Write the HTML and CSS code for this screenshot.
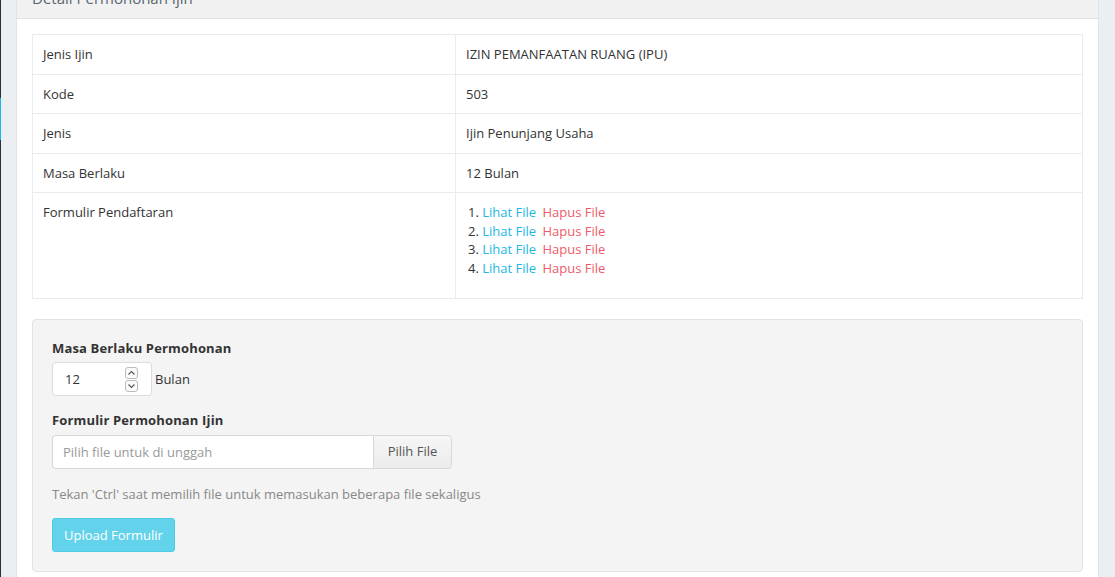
FILE: index.html
```html
<!DOCTYPE html>
<html>
<head>
<meta charset="utf-8">
<link rel="stylesheet" href="styles.css">
</head>
<body>
<div class="sidebar">
  <div class="side-gap"></div>
  <div class="side-active"></div>
</div>
<div class="content">
  <div class="panel">
    <div class="panel-heading">Detail Permohonan Ijin</div>
    <div class="panel-body">
      <table class="info">
        <tr><td class="k">Jenis Ijin</td><td>IZIN PEMANFAATAN RUANG (IPU)</td></tr>
        <tr><td class="k">Kode</td><td>503</td></tr>
        <tr><td class="k">Jenis</td><td>Ijin Penunjang Usaha</td></tr>
        <tr><td class="k">Masa Berlaku</td><td>12 Bulan</td></tr>
        <tr><td class="k">Formulir Pendaftaran</td><td>
          <ol class="files">
            <li><a class="view">Lihat File</a> <a class="del">Hapus File</a></li>
            <li><a class="view">Lihat File</a> <a class="del">Hapus File</a></li>
            <li><a class="view">Lihat File</a> <a class="del">Hapus File</a></li>
            <li><a class="view">Lihat File</a> <a class="del">Hapus File</a></li>
          </ol>
        </td></tr>
      </table>
      <div class="well">
        <div class="form-group">
          <label class="lbl">Masa Berlaku Permohonan</label>
          <div class="row-inline">
            <div class="num-box">
              <input class="num-input" type="text" value="12">
              <div class="spin">
                <span class="spin-btn"><svg width="9" height="6" viewBox="0 0 9 6"><path d="M1.5 4.5 L4.5 1.5 L7.5 4.5" fill="none" stroke="#555" stroke-width="1.1"/></svg></span>
                <span class="spin-btn"><svg width="9" height="6" viewBox="0 0 9 6"><path d="M1.5 1.5 L4.5 4.5 L7.5 1.5" fill="none" stroke="#555" stroke-width="1.1"/></svg></span>
              </div>
            </div>
            <span class="unit">Bulan</span>
          </div>
        </div>
        <div class="form-group last">
          <label class="lbl">Formulir Permohonan Ijin</label>
          <div class="input-group">
            <input class="file-text" type="text" placeholder="Pilih file untuk di unggah">
            <span class="file-btn">Pilih File</span>
          </div>
        </div>
        <p class="help">Tekan 'Ctrl' saat memilih file untuk memasukan beberapa file sekaligus</p>
        <button class="btn-upload">Upload Formulir</button>
      </div>
    </div>
  </div>
</div>
</body>
</html>
```

FILE: styles.css
```css
html, body {
  margin: 0;
  padding: 0;
  height: 100%;
  overflow: hidden;
}
body {
  display: flex;
  font-family: "Open Sans", "Noto Sans", sans-serif;
  font-size: 13px;
  line-height: 1.42857;
  color: #333;
  background: #ebeff1;
}
.sidebar {
  width: 1px;
  flex: none;
  background: #2b2e3b;
  display: flex;
  flex-direction: column;
}
.side-gap { height: 98px; }
.side-active { height: 42px; background: #1ab7e6; }
.content {
  flex: 1;
  padding: 0 16px 0 15px;
}
.panel {
  margin-top: -22px;
  background: #fff;
  border: 1px solid #dfe5e7;
  border-top: none;
}
.panel-heading {
  background: #f1f1f1;
  border-bottom: 1px solid #dfe4e6;
  padding: 10px 15px;
  font-size: 15px;
  line-height: 20px;
  color: #58666e;
}
.panel-body {
  padding: 15px;
}
.info {
  width: 100%;
  border-collapse: collapse;
  margin-bottom: 20px;
}
.info td {
  border: 1px solid #e7ecee;
  padding: 10px;
  vertical-align: top;
}
.info td.k { width: 402px; }
.files {
  list-style: decimal inside;
  margin: 0 0 10px;
  padding: 0 0 0 2px;
}
.files li::marker { content: counter(list-item) ". "; }
.files a { text-decoration: none; }
.view { color: #23b7e5; }
.del { color: #f05a6a; margin-left: 3px; }
.well {
  background: #f4f4f4;
  border: 1px solid #e3e3e3;
  border-radius: 4px;
  padding: 19px 19px 19px;
}
.form-group { margin-bottom: 15px; }
.form-group.last { margin-bottom: 16px; }
.lbl {
  display: block;
  font-weight: bold;
  margin-bottom: 5px;
  letter-spacing: 0.15px;
}
.row-inline {
  display: flex;
  align-items: center;
  gap: 3px;
}
.num-box {
  width: 100px;
  height: 34px;
  box-sizing: border-box;
  border: 1px solid #d8dcde;
  border-radius: 4px;
  background: #fff;
  display: flex;
  align-items: center;
  padding: 0 13px 0 12px;
}
.num-input {
  flex: 1;
  min-width: 0;
  border: none;
  outline: none;
  font: inherit;
  color: #333;
  padding: 0;
  background: transparent;
}
.spin {
  display: flex;
  flex-direction: column;
  gap: 1px;
}
.spin-btn {
  width: 13px;
  height: 12px;
  box-sizing: border-box;
  border: 1px solid #b8bcc0;
  border-radius: 3px;
  background: #fbfbfb;
  display: flex;
  align-items: center;
  justify-content: center;
}
.spin-btn svg { display: block; }
.unit { color: #333; }
.input-group {
  display: flex;
  width: 400px;
  height: 34px;
}
.file-text {
  flex: 1;
  min-width: 0;
  box-sizing: border-box;
  height: 34px;
  border: 1px solid #d5d9db;
  border-right: none;
  border-radius: 4px 0 0 4px;
  padding: 6px 10px;
  font: inherit;
  color: #333;
  outline: none;
  background: #fff;
}
.file-text::placeholder { color: #999; }
.file-btn {
  width: 79px;
  box-sizing: border-box;
  border: 1px solid #d5d9db;
  border-radius: 0 4px 4px 0;
  background: linear-gradient(#f6f6f6, #ececec);
  color: #555;
  display: flex;
  align-items: center;
  justify-content: center;
}
.help {
  margin: 0 0 15px;
  color: #888;
}
.btn-upload {
  display: block;
  height: 34px;
  padding: 6px 11px;
  font: inherit;
  line-height: 20px;
  white-space: nowrap;
  color: #fff;
  background: #63d3eb;
  border: 1px solid #4fcbe4;
  border-radius: 3px;
}
```
